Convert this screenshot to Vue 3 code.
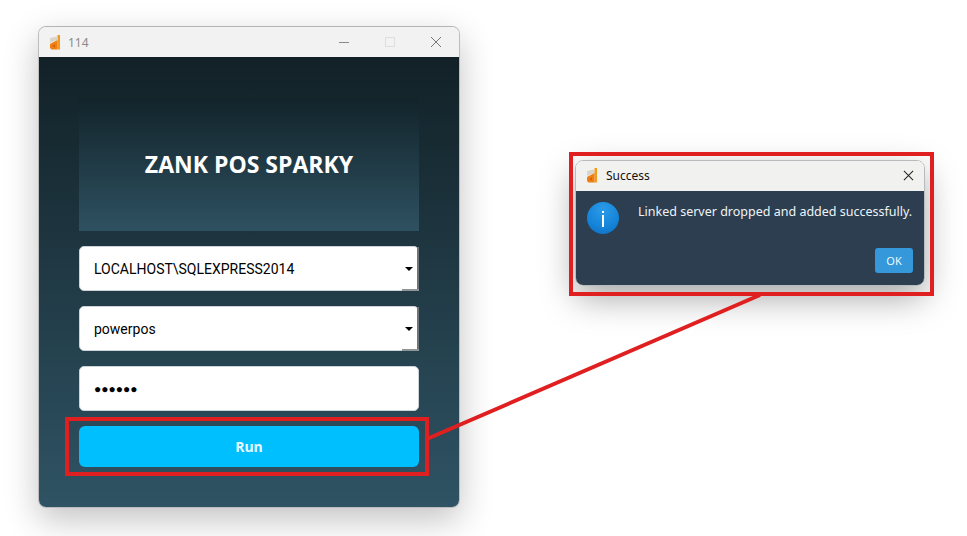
<script setup>
const fields = [
  { text: 'LOCALHOST\\SQLEXPRESS2014', combo: true },
  { text: 'powerpos', combo: true },
  { text: '●●●●●●', combo: false },
];
</script>

<template>
  <div class="desktop">
    <!-- login window -->
    <div class="window login">
      <div class="titlebar">
        <svg class="app-icon" viewBox="0 0 12 15">
          <path d="M1 3 L8 1.5 L8 5 L1 8 Z" fill="#d9d5cd" />
          <path d="M8.5 0 L11 0 L11 14.5 L8.5 14.5 Z" fill="#f29a1c" />
          <path d="M1 9 L8.5 5 L8.5 14.5 L2.5 14.5 L1 13 Z" fill="#ee7f12" />
          <path d="M3 11 L6 9.5 L6 12.5 Z" fill="#d85a0a" />
        </svg>
        <span class="title">114</span>
        <div class="controls">
          <svg viewBox="0 0 12 12" class="ctl min"><path d="M1 6.5 H11" stroke="#8a8a8a" fill="none" /></svg>
          <svg viewBox="0 0 12 12" class="ctl max"><rect x="1.5" y="1.5" width="9" height="9" stroke="#dedede" fill="none" /></svg>
          <svg viewBox="0 0 12 12" class="ctl close"><path d="M1 1 L11 11 M11 1 L1 11" stroke="#777" fill="none" /></svg>
        </div>
      </div>
      <div class="login-body">
        <div class="banner"><h1>ZANK POS SPARKY</h1></div>
        <div v-for="f in fields" :key="f.text" class="field" :class="{ pass: !f.combo }">
          <span>{{ f.text }}</span>
          <template v-if="f.combo">
            <i class="arrow"></i>
            <i class="edge-right"></i>
            <i class="edge-bottom"></i>
          </template>
        </div>
        <button class="run">Run</button>
      </div>
    </div>

    <!-- success dialog -->
    <div class="window dialog">
      <div class="titlebar dlg-bar">
        <svg class="app-icon" viewBox="0 0 12 15">
          <path d="M1 3 L8 1.5 L8 5 L1 8 Z" fill="#d9d5cd" />
          <path d="M8.5 0 L11 0 L11 14.5 L8.5 14.5 Z" fill="#f29a1c" />
          <path d="M1 9 L8.5 5 L8.5 14.5 L2.5 14.5 L1 13 Z" fill="#ee7f12" />
          <path d="M3 11 L6 9.5 L6 12.5 Z" fill="#d85a0a" />
        </svg>
        <span class="dlg-title">Success</span>
        <svg viewBox="0 0 12 12" class="dlg-close"><path d="M1 1 L11 11 M11 1 L1 11" stroke="#222" stroke-width="1.1" fill="none" /></svg>
      </div>
      <div class="dlg-body">
        <div class="dlg-row">
          <div class="info"><span class="info-dot"></span><span class="info-bar"></span></div>
          <p>Linked server dropped and added successfully.</p>
        </div>
        <div class="dlg-actions"><button class="ok">OK</button></div>
      </div>
    </div>

    <!-- red annotations -->
    <div class="mark mark-run"></div>
    <div class="mark mark-dialog"></div>
    <svg class="connector" width="967" height="536">
      <line x1="428" y1="438.5" x2="760" y2="295" stroke="#e02020" stroke-width="4" />
    </svg>
  </div>
</template>

<style scoped>
.desktop {
  position: relative;
  width: 967px;
  height: 536px;
  background: #fff;
  overflow: hidden;
  font-family: "Open Sans", "Noto Sans", sans-serif;
}
.window {
  position: absolute;
  box-sizing: border-box;
  display: flex;
  flex-direction: column;
  overflow: hidden;
}
.login {
  left: 38px;
  top: 26px;
  width: 422px;
  height: 482px;
  border: 1px solid #bdbdbd;
  border-top-color: #b4b4b4;
  border-radius: 8px;
  box-shadow: 0 12px 34px rgba(0, 0, 0, 0.24);
}
.titlebar {
  display: flex;
  align-items: center;
  flex: none;
  height: 30px;
  background: #f2f2f2;
}
.app-icon {
  width: 12px;
  height: 15px;
  margin-left: 10px;
  flex: none;
}
.title {
  margin-left: 7px;
  font-size: 12px;
  color: #8b8b8b;
  font-family: "Noto Sans", sans-serif;
}
.controls {
  margin-left: auto;
  display: flex;
  align-items: center;
  gap: 34px;
  padding-right: 17px;
}
.ctl {
  width: 12px;
  height: 12px;
  display: block;
}
.login-body {
  flex: 1;
  box-sizing: border-box;
  padding: 40px 40px 0;
  display: flex;
  flex-direction: column;
  gap: 15px;
  background: linear-gradient(180deg, #122127 0%, #2f5364 100%);
}
.banner {
  height: 134px;
  flex: none;
  display: flex;
  align-items: center;
  justify-content: center;
  background: linear-gradient(180deg, #12232a 0%, #2e5161 100%);
}
.banner h1 {
  margin: 0;
  font-family: "Open Sans", sans-serif;
  font-size: 23px;
  font-weight: 700;
  color: #fff;
}
.field {
  position: relative;
  box-sizing: border-box;
  height: 45px;
  flex: none;
  display: flex;
  align-items: center;
  padding-left: 14px;
  background: #fff;
  border-radius: 5px;
  color: #000;
  font-family: Roboto, sans-serif;
  font-size: 14px;
  border: 1px solid #cdd3d6;
}
.field.pass {
  font-size: 12px;
  letter-spacing: 0;
}
.arrow {
  position: absolute;
  right: 5px;
  top: 20px;
  width: 0;
  height: 0;
  border-left: 4px solid transparent;
  border-right: 4px solid transparent;
  border-top: 4px solid #000;
}
.edge-right {
  position: absolute;
  right: -1px;
  top: 0;
  bottom: -1px;
  width: 2px;
  background: #6f7477;
}
.edge-bottom {
  position: absolute;
  right: -1px;
  bottom: -1px;
  width: 17px;
  height: 2px;
  background: #8f9497;
}
.run {
  height: 41px;
  flex: none;
  border: none;
  border-radius: 6px;
  background: #00bfff;
  color: #e8fbff;
  font-family: "Open Sans", sans-serif;
  font-size: 14px;
  font-weight: 700;
}
.dialog {
  left: 575px;
  top: 160px;
  width: 350px;
  height: 126px;
  border: 1px solid #b9bcbe;
  border-radius: 8px;
  box-shadow: 0 12px 34px rgba(0, 0, 0, 0.35);
}
.dlg-bar {
  height: 30px;
  background: #f1f2f0;
  padding-bottom: 2px;
  box-sizing: border-box;
}
.dlg-title {
  margin-left: 8px;
  font-size: 12px;
  color: #111;
  font-family: "Noto Sans", sans-serif;
}
.dlg-close {
  width: 11px;
  height: 11px;
  margin-left: auto;
  margin-right: 10px;
}
.dlg-body {
  flex: 1;
  box-sizing: border-box;
  background: #2c3e50;
  padding: 11px 11px 12px 11px;
  display: flex;
  flex-direction: column;
  justify-content: space-between;
}
.dlg-row {
  display: flex;
  align-items: flex-start;
  gap: 19px;
}
.info {
  position: relative;
  width: 32px;
  height: 32px;
  flex: none;
  border-radius: 50%;
  background: radial-gradient(circle at 50% 25%, #2a9be8 0%, #1583d8 60%, #0f6cbc 100%);
}
.info-dot {
  position: absolute;
  left: 15px;
  top: 9px;
  width: 2px;
  height: 2px;
  background: #fff;
}
.info-bar {
  position: absolute;
  left: 15px;
  top: 13px;
  width: 2px;
  height: 12px;
  background: #fff;
}
.dlg-row p {
  margin: 1px 0 0;
  font-family: "Noto Sans", sans-serif;
  font-size: 12.5px;
  line-height: 18px;
  color: #f0f3f5;
  white-space: nowrap;
}
.dlg-actions {
  display: flex;
  justify-content: flex-end;
}
.ok {
  width: 38px;
  height: 25px;
  border: none;
  border-radius: 3px;
  background: #3498db;
  color: #eef7fd;
  font-family: "Noto Sans", sans-serif;
  font-size: 11px;
  padding: 0;
}
.mark {
  position: absolute;
  box-sizing: border-box;
  border: 4px solid #e02020;
}
.mark-run {
  left: 65px;
  top: 417px;
  width: 364px;
  height: 59px;
}
.mark-dialog {
  left: 569px;
  top: 152px;
  width: 365px;
  height: 144px;
}
.connector {
  position: absolute;
  left: 0;
  top: 0;
  pointer-events: none;
}
</style>
